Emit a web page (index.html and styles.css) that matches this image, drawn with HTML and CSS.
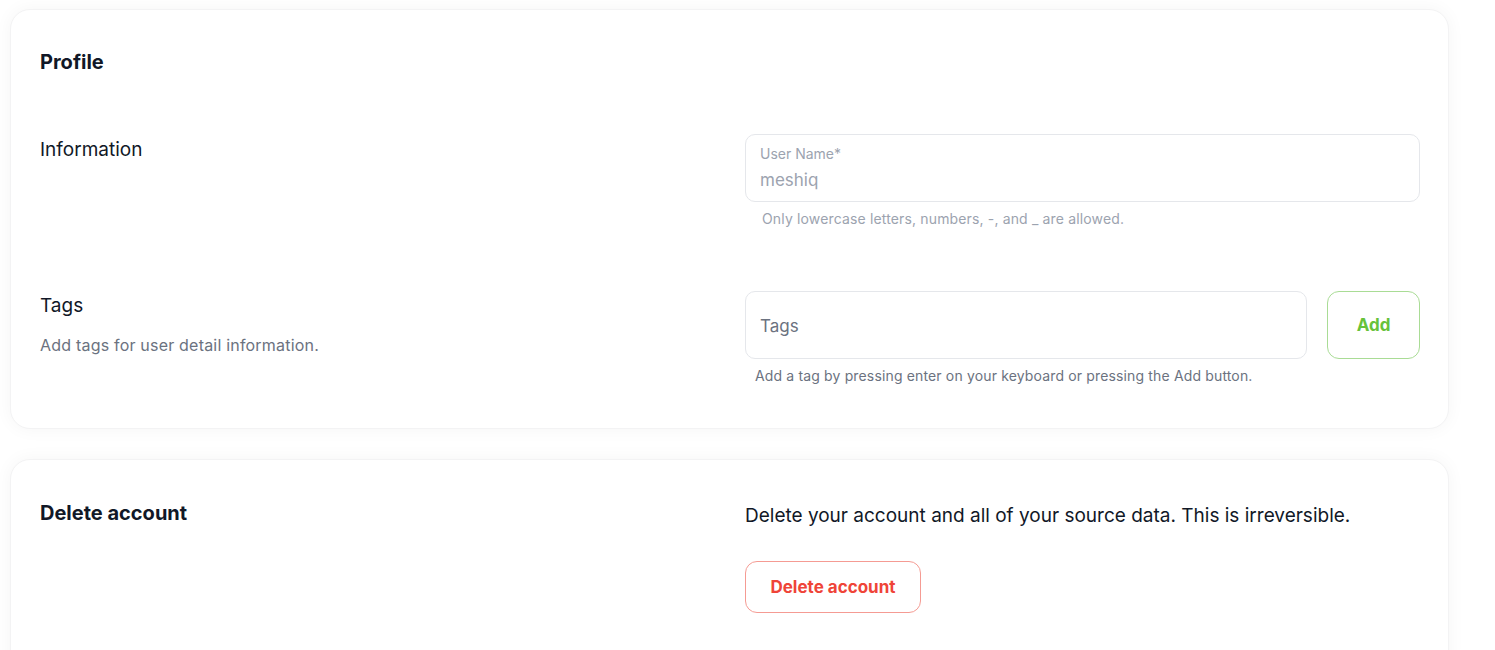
FILE: index.html
```html
<!DOCTYPE html>
<html lang="en">
<head>
    <meta charset="UTF-8">
    <meta name="viewport" content="width=device-width, initial-scale=1.0">
    <title>Profile</title>
    <link rel="stylesheet" href="styles.css">
</head>
<body>

    <div class="page">

        <section class="card">
            <h2 class="card-title">Profile</h2>

            <div class="row row-info">
                <div class="row-label">
                    <div class="label label-info">Information</div>
                </div>
                <div class="row-field">
                    <div class="input input-floating">
                        <div class="input-label">User Name*</div>
                        <div class="input-value">meshiq</div>
                    </div>
                    <div class="hint hint-light">Only lowercase letters, numbers, -, and _ are allowed.</div>
                </div>
            </div>

            <div class="row row-tags">
                <div class="row-label">
                    <div class="label">Tags</div>
                    <div class="label-desc">Add tags for user detail information.</div>
                </div>
                <div class="row-field">
                    <div class="tag-line">
                        <div class="input input-plain">Tags</div>
                        <button class="btn btn-add">Add</button>
                    </div>
                    <div class="hint hint-dark">Add a tag by pressing enter on your keyboard or pressing the Add button.</div>
                </div>
            </div>
        </section>

        <section class="card card-danger">
            <div class="row">
                <div class="row-label">
                    <h2 class="card-title">Delete account</h2>
                </div>
                <div class="row-field">
                    <p class="danger-text">Delete your account and all of your source data. This is irreversible.</p>
                    <button class="btn btn-delete">Delete account</button>
                </div>
            </div>
        </section>

    </div>

</body>
</html>
```

FILE: styles.css
```css
body {
    margin: 0;
    background-color: #fff;
    font-family: Inter, "Noto Sans", Arial, sans-serif;
    color: #111827;
}
.page {
    width: 1439px;
    padding: 9px 0 0 10px;
    display: flex;
    flex-direction: column;
    gap: 30px;
}
.card {
    background-color: #fff;
    border: 1px solid #f3f3f4;
    border-radius: 20px;
    box-shadow: 0 0 18px rgba(0, 0, 0, 0.045);
    padding: 39px 29px 42px;
}
.card-title {
    margin: 0;
    font-size: 20px;
    line-height: 26px;
    font-weight: 700;
    color: #111827;
}
.row {
    display: grid;
    grid-template-columns: 675px 675px;
    column-gap: 30px;
}
.row-info {
    margin-top: 59px;
}
.row-tags {
    margin-top: 62px;
}
.label {
    font-size: 19px;
    line-height: 28px;
    margin-top: 1px;
    color: #111827;
}
.label-info {
    margin-top: 2px;
}
.label-desc {
    margin-top: 13px;
    font-size: 16px;
    line-height: 24px;
    letter-spacing: 0.2px;
    color: #6b7280;
}
.input {
    box-sizing: border-box;
    height: 68px;
    border: 1px solid #e5e7eb;
    border-radius: 10px;
    padding: 0 14px;
    background-color: #fff;
}
.input-floating {
    padding-top: 9px;
}
.input-label {
    font-size: 14px;
    line-height: 20px;
    color: #9ca3af;
}
.input-value {
    font-size: 17px;
    line-height: 24px;
    color: #9ca3af;
    margin-top: 4px;
}
.input-plain {
    flex: 1;
    display: flex;
    align-items: center;
    padding-top: 2px;
    font-size: 17px;
    color: #6b7280;
}
.hint {
    font-size: 14px;
    line-height: 20px;
    letter-spacing: 0.15px;
}
.hint-light {
    margin-top: 7px;
    padding-left: 17px;
    color: #9ca3af;
}
.hint-dark {
    margin-top: 7px;
    padding-left: 10px;
    color: #6b7280;
}
.tag-line {
    display: flex;
    gap: 20px;
}
.btn {
    box-sizing: border-box;
    background-color: #fff;
    font-family: inherit;
    font-size: 17px;
    font-weight: 700;
    cursor: pointer;
}
.btn-add {
    width: 93px;
    height: 68px;
    border: 1px solid #a9dc95;
    border-radius: 12px;
    color: #67c23a;
}
.card-danger {
    padding-top: 40px;
    padding-bottom: 60px;
}
.danger-text {
    margin: 0 0 29px;
    font-size: 19px;
    line-height: 32px;
    color: #111827;
}
.btn-delete {
    width: 176px;
    height: 52px;
    border: 1px solid #f59b93;
    border-radius: 12px;
    color: #ef4438;
}
```
